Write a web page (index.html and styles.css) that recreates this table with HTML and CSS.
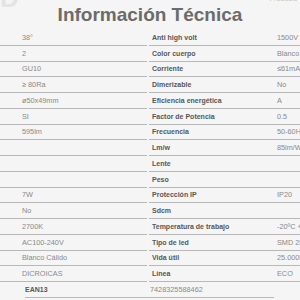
FILE: index.html
```html
<!DOCTYPE html>
<html lang="es">
<head>
<meta charset="utf-8">
<title>Información Técnica</title>
<link rel="stylesheet" href="styles.css">
</head>
<body>
<div class="page">
  <header class="head">
    <span class="logo">D</span>
    <h1 class="title">Información Técnica</h1>
    <span class="crumb">Producto</span>
  </header>
  <div class="specs">
    <div class="col left">
      <div class="row"><span class="val">38°</span></div>
      <div class="row"><span class="val">2</span></div>
      <div class="row"><span class="val">GU10</span></div>
      <div class="row"><span class="val">≥ 80Ra</span></div>
      <div class="row"><span class="val">ø50x49mm</span></div>
      <div class="row"><span class="val">SI</span></div>
      <div class="row"><span class="val">595lm</span></div>
      <div class="row"><span class="val"></span></div>
      <div class="row"><span class="val"></span></div>
      <div class="row"><span class="val"></span></div>
      <div class="row"><span class="val">7W</span></div>
      <div class="row"><span class="val">No</span></div>
      <div class="row"><span class="val">2700K</span></div>
      <div class="row"><span class="val">AC100-240V</span></div>
      <div class="row"><span class="val">Blanco Cálido</span></div>
      <div class="row"><span class="val">DICROICAS</span></div>
    </div>
    <div class="col right">
      <div class="row"><span class="lab">Anti high volt</span><span class="val">1500V</span></div>
      <div class="row"><span class="lab">Color cuerpo</span><span class="val">Blanco</span></div>
      <div class="row"><span class="lab">Corriente</span><span class="val">≤61mA</span></div>
      <div class="row"><span class="lab">Dimerizable</span><span class="val">No</span></div>
      <div class="row"><span class="lab">Eficiencia energética</span><span class="val">A</span></div>
      <div class="row"><span class="lab">Factor de Potencia</span><span class="val">0.5</span></div>
      <div class="row"><span class="lab">Frecuencia</span><span class="val">50-60Hz</span></div>
      <div class="row"><span class="lab">Lm/w</span><span class="val">85lm/W</span></div>
      <div class="row"><span class="lab">Lente</span><span class="val"></span></div>
      <div class="row"><span class="lab">Peso</span><span class="val"></span></div>
      <div class="row"><span class="lab">Protección IP</span><span class="val">IP20</span></div>
      <div class="row"><span class="lab">Sdcm</span><span class="val"></span></div>
      <div class="row"><span class="lab">Temperatura de trabajo</span><span class="val">-20ºC +40ºC</span></div>
      <div class="row"><span class="lab">Tipo de led</span><span class="val">SMD 2835</span></div>
      <div class="row"><span class="lab">Vida útil</span><span class="val">25.000h</span></div>
      <div class="row"><span class="lab">Línea</span><span class="val">ECO</span></div>
    </div>
  </div>
  <div class="ean"><span class="lab">EAN13</span><span class="val">7428325588462</span></div>
</div>
</body>
</html>
```

FILE: styles.css
```css
html, body {
  margin: 0;
  padding: 0;
  background: #f5f5f5;
  overflow: hidden;
}

body {
  font-family: "Liberation Sans", Arial, sans-serif;
}

.page {
  width: 300px;
  height: 300px;
  overflow: hidden;
}

.head {
  display: grid;
  grid-template-columns: 1fr auto 1fr;
  height: 30px;
  align-items: start;
}

.logo {
  margin-top: -15px;
  font-size: 26px;
  line-height: 26px;
  font-weight: bold;
  color: #e4e4e4;
}

.title {
  margin: 0;
  padding-top: 5px;
  font-size: 19px;
  line-height: 19px;
  font-weight: bold;
  color: #6b6b6b;
  white-space: nowrap;
}

.crumb {
  margin-top: -5px;
  margin-left: 27px;
  font-size: 7px;
  line-height: 8px;
  color: #c4c4c4;
  white-space: nowrap;
}

.specs {
  display: grid;
  grid-template-columns: 146.5px 1fr;
  column-gap: 2px;
}

.row {
  display: flex;
  align-items: center;
  height: 14.75px;
  border-bottom: 1px solid #b8b8b8;
  font-size: 7px;
  white-space: nowrap;
}

.left .row {
  padding-left: 22px;
}

.right .row {
  padding-left: 3.5px;
}

.lab {
  flex: none;
  width: 125px;
  font-weight: bold;
  color: #575757;
}

.val {
  font-size: 7.3px;
  color: #8a8a8a;
}

.ean {
  display: flex;
  align-items: center;
  margin-left: 25px;
  width: 249px;
  height: 15.25px;
  border-bottom: 1px solid #b8b8b8;
  font-size: 7px;
  white-space: nowrap;
}
```
